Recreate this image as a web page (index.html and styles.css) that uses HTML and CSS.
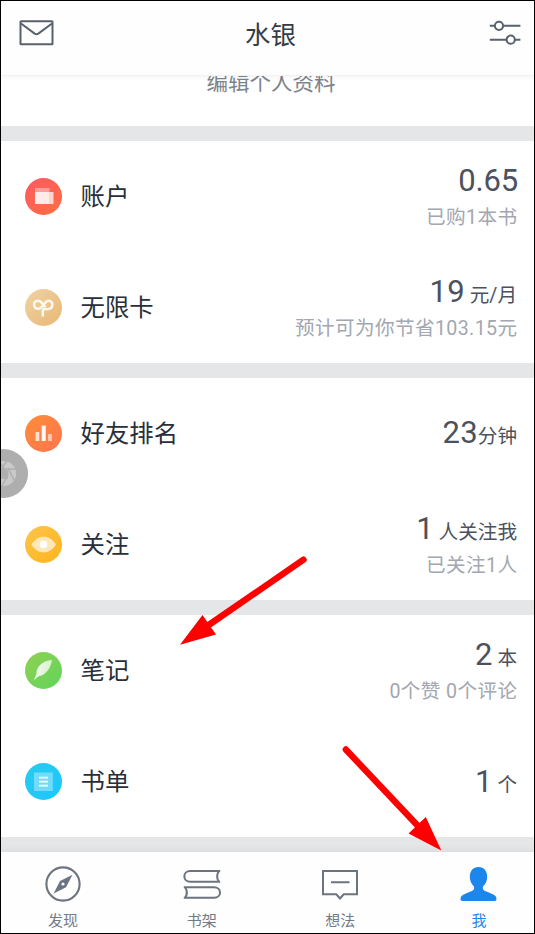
FILE: index.html
```html
<!DOCTYPE html>
<html lang="zh-CN">
<head>
<meta charset="utf-8">
<title>我</title>
<link rel="stylesheet" href="styles.css">
</head>
<body>
<div class="screen">
  <header class="header">
    <svg class="icon-mail" viewBox="0 0 36 26" fill="none" stroke="#59616d" stroke-width="2" stroke-linejoin="round"><rect x="1.5" y="1.2" width="32" height="23" rx=".5"/><path d="M2 3.5 15.7 13.6Q17.5 14.8 19.3 13.6L33 3.5"/></svg>
    <h1 class="title">水银</h1>
    <svg class="icon-settings" viewBox="0 0 32 26" fill="none" stroke="#59616d" stroke-width="2"><path d="M.8 5.8H5.5M14.5 5.8H31.4M.8 19.7H17M26 19.7H31.4"/><circle cx="10" cy="5.8" r="4.1"/><circle cx="21.7" cy="19.7" r="4.1"/></svg>
  </header>

  <main class="content">
    <div class="profile"><span class="edit">编辑个人资料</span></div>

    <section class="group">
      <div class="row">
        <svg class="badge" viewBox="0 0 37 37"><defs><linearGradient id="g1" x1="0" y1="0" x2=".7" y2="1"><stop stop-color="#fb5a63"/><stop offset="1" stop-color="#fe6c45"/></linearGradient></defs><circle cx="18.5" cy="18.5" r="18.5" fill="url(#g1)"/><path d="M10 10H24.5V14H10Z" fill="#fff" opacity=".38"/><path d="M24 14H28.5V26H24Z" fill="#fff" opacity=".72"/><path d="M10 14H24V26H10Z" fill="#fff" opacity=".87"/></svg>
        <span class="label">账户</span>
        <div class="info"><div class="value amount"><b>0.65</b></div><div class="sub">已购1本书</div></div>
      </div>
      <div class="row">
        <svg class="badge" viewBox="0 0 37 37"><defs><linearGradient id="g2" x1="0" y1="0" x2="1" y2="1"><stop stop-color="#f0d2a6"/><stop offset="1" stop-color="#e8b874"/></linearGradient></defs><circle cx="18.5" cy="18.5" r="18.5" fill="url(#g2)"/><path d="M17.8 27.5V21.6C17.8 19.4 19.6 20.3 23.2 20.1C28.6 19.7 28.8 11.8 23.6 11.8C19.2 11.8 17.8 19.8 13 19.8C7.8 19.6 7.8 12 13 11.8C15.2 11.7 16.6 13.2 18.6 15.8L20.5 18" fill="none" stroke="#fff8ed" stroke-width="2.5"/></svg>
        <span class="label">无限卡</span>
        <div class="info"><div class="value"><b>19</b> 元/月</div><div class="sub">预计可为你节省103.15元</div></div>
      </div>
    </section>

    <section class="group">
      <div class="row">
        <svg class="badge" viewBox="0 0 37 37"><defs><linearGradient id="g3" x1="0" y1="0" x2="1" y2="1"><stop stop-color="#ff8d38"/><stop offset="1" stop-color="#ff7450"/></linearGradient></defs><circle cx="18.5" cy="18.5" r="18.5" fill="url(#g3)"/><path d="M10.5 17H14.3V26H10.5Z" fill="#fff" opacity=".75"/><path d="M16.7 10.5H20.7V26H16.7Z" fill="#fff" opacity=".96"/><path d="M23 19H26.8V26H23Z" fill="#fff" opacity=".58"/></svg>
        <span class="label">好友排名</span>
        <div class="info"><div class="value single"><b>23</b>分钟</div></div>
      </div>
      <div class="row">
        <svg class="badge" viewBox="0 0 37 37"><defs><linearGradient id="g4" x1="0" y1="0" x2="1" y2="1"><stop stop-color="#fbc54b"/><stop offset="1" stop-color="#feb41c"/></linearGradient></defs><circle cx="18.5" cy="18.5" r="18.5" fill="url(#g4)"/><path d="M6.5 18.5C12.2 8 24.8 8 31 18.5C24.8 29 12.2 29 6.5 18.5Z" fill="#fff" opacity=".65"/><circle cx="18.5" cy="18.5" r="3.8" fill="#fff"/></svg>
        <span class="label">关注</span>
        <div class="info"><div class="value"><b>1</b> 人关注我</div><div class="sub">已关注1人</div></div>
      </div>
    </section>

    <section class="group">
      <div class="row">
        <svg class="badge" viewBox="0 0 37 37"><defs><linearGradient id="g5" x1="0" y1="0" x2="1" y2="1"><stop stop-color="#91d052"/><stop offset="1" stop-color="#60d55d"/></linearGradient><linearGradient id="leaf" x1="0" y1=".3" x2="1" y2=".7"><stop stop-color="#fff" stop-opacity=".95"/><stop offset="1" stop-color="#fff" stop-opacity=".65"/></linearGradient></defs><circle cx="18.5" cy="18.5" r="18.5" fill="url(#g5)"/><path d="M9.3 28.4C9.5 26 10.3 24.2 11.4 22.4C11.2 14.7 17 8.9 27 8C25.7 16 21.3 22.8 14 24.2C12.2 24.8 11 26.5 9.3 28.4Z" fill="url(#leaf)"/></svg>
        <span class="label">笔记</span>
        <div class="info"><div class="value"><b>2</b> 本</div><div class="sub">0个赞 0个评论</div></div>
      </div>
      <div class="row">
        <svg class="badge" viewBox="0 0 37 37"><defs><linearGradient id="g6" x1="0" y1="0" x2="1" y2="1"><stop stop-color="#27cbed"/><stop offset="1" stop-color="#1cc7ff"/></linearGradient></defs><circle cx="18.5" cy="18.5" r="18.5" fill="url(#g6)"/><path d="M9 9.5H27.8V28H9Z" fill="#fff" opacity=".36"/><path d="M14 14.7H23M14 18.7H23M14 22.7H23" stroke="#fff" stroke-width="1.7"/></svg>
        <span class="label">书单</span>
        <div class="info"><div class="value count"><b>1</b> 个</div></div>
      </div>
    </section>
  </main>

  <nav class="tabs">
    <div class="tab">
      <svg viewBox="0 0 38 38"><circle cx="19" cy="19" r="16.6" fill="none" stroke="#6c7480" stroke-width="2.1"/><path fill="#6c7480" fill-rule="evenodd" d="M28.5 9.8 22 22.2 9.7 28.4 16 16ZM19 17.4A1.6 1.6 0 1 0 19 20.6 1.6 1.6 0 1 0 19 17.4Z"/></svg>
      <span>发现</span>
    </div>
    <div class="tab">
      <svg viewBox="0 0 38 38" fill="none" stroke="#6c7480" stroke-width="2"><path d="M37.2 6.1H7.2C-.6 6.1-.6 16.7 7.2 16.7H37.2M35.9 6.1Q32.2 11.4 35.9 16.7M.8 22.2H31C39 22.2 39 32.8 31 32.8H.8M2 22.2Q5.7 27.5 2 32.8"/></svg>
      <span>书架</span>
    </div>
    <div class="tab">
      <svg viewBox="0 0 38 38" fill="none" stroke="#6c7480" stroke-width="2"><path d="M2 6H36V29.3H22.7L19 33.5 15.3 29.3H2ZM10 17.3H28.5"/></svg>
      <span>想法</span>
    </div>
    <div class="tab active">
      <svg viewBox="0 0 38 38"><path fill="#1d86ec" d="M18.5 2C24 2 27.2 6.2 27.2 11.8C27.2 16 25.5 19 23 21.4C22.3 24.3 23.7 25.2 26.5 26.5L33.3 29.5C35.8 30.8 36.5 32.2 36.5 34.3Q36.5 36 34.7 36H2.3Q.5 36 .5 34.3C.5 32.2 1.2 30.8 3.7 29.5L10.5 26.5C13.3 25.2 14.7 24.3 14 21.4C11.5 19 9.8 16 9.8 11.8C9.8 6.2 13 2 18.5 2Z"/></svg>
      <span>我</span>
    </div>
  </nav>

  <svg class="float-button" viewBox="0 0 28 50"><circle cx="2.7" cy="24.5" r="24.4" fill="#aeaeae"/><circle cx="2.7" cy="24.5" r="12.5" fill="#c9c9c9"/><path d="M-2 12 5 23M6 11.5-1 22.5M15 20H1.5M13 31 7 19M1 37 7 26M-6 29H7" stroke="#aeaeae" stroke-width="1.5"/><path d="M3 19.5 7.3 22V27L3 29.5-1.3 27V22Z" fill="#aeaeae"/></svg>

  <svg class="arrows" viewBox="0 0 535 934" fill="#fe0000" stroke="#fe0000"><path d="M303.5 559.7 208 625.5M345.8 749.5 418 826" fill="none" stroke-width="6.4" stroke-linecap="round"/><path stroke="none" d="M180 644.8 202.5 615 216 634.5ZM441.3 850.5 408.5 833.5 425.8 817Z"/></svg>
</div>
</body>
</html>
```

FILE: styles.css
```css
* { box-sizing: border-box; }

body {
  margin: 0;
  font-family: Roboto, "Noto Sans CJK SC", sans-serif;
}

.screen {
  position: relative;
  display: flex;
  flex-direction: column;
  width: 535px;
  height: 934px;
  border: 1px solid #000;
  background: #fff;
  overflow: hidden;
}

.header {
  display: grid;
  grid-template-columns: 36px 1fr 32px;
  align-items: center;
  flex: none;
  height: 75px;
  padding: 0 13px 10px 18px;
  border-bottom: 1px solid #f2f2f3;
  background: #fefefe;
  box-shadow: 0 1px 5px rgba(0, 0, 0, .05);
  z-index: 1;
}

.icon-mail { width: 36px; height: 26px; }
.icon-settings { width: 32px; height: 26px; }

.title {
  margin: 3px 0 0;
  padding-right: 3px;
  text-align: center;
  font-size: 25.5px;
  font-weight: 400;
  line-height: 36px;
  color: #353c46;
}

.content {
  display: flex;
  flex-direction: column;
  gap: 15px;
  height: 776px;
  flex: none;
  background: #e5e6e8;
}

.profile {
  display: flex;
  justify-content: center;
  align-items: flex-start;
  flex: none;
  height: 50px;
  padding-left: 7px;
  background: #fff;
}

.edit {
  margin-top: -9px;
  font-size: 21.5px;
  line-height: 32px;
  color: #7d838c;
}

.group { flex: none; background: #fff; }

.row {
  display: flex;
  align-items: center;
  height: 111px;
  padding: 0 17px 0 24px;
}

.badge { width: 37px; height: 37px; }

.label {
  flex: 1;
  margin-left: 18.5px;
  font-size: 24.4px;
  line-height: 36px;
  color: #292f39;
}

.info { text-align: right; }

.value {
  height: 38px;
  font-size: 19.6px;
  line-height: 38px;
  color: #4c525d;
  white-space: nowrap;
}

.value b {
  font-size: 31px;
  font-weight: 400;
  letter-spacing: .2px;
}

.amount { margin-right: -1px; }
.amount b { letter-spacing: -.2px; }
.single { margin-top: -2px; }

.sub {
  height: 34px;
  margin-right: -.5px;
  font-size: 19.6px;
  line-height: 36px;
  letter-spacing: .4px;
  color: #a2a7b0;
  white-space: nowrap;
}

.info:has(.sub) { padding-top: 3px; }

.tabs {
  display: grid;
  grid-template-columns: repeat(4, 138.7px);
  justify-content: center;
  flex: none;
  height: 81px;
  padding-left: 7px;
  background: #fefefe;
  box-shadow: 0 -1px 8px rgba(0, 0, 0, .06);
  z-index: 1;
}

.tab {
  display: flex;
  flex-direction: column;
  align-items: center;
  padding-top: 13px;
  font-size: 15px;
  line-height: 22px;
  color: #737b86;
}

.tab svg { width: 38px; height: 38px; margin-bottom: 7px; }

.active { color: #1d86ec; }

.float-button {
  position: absolute;
  left: 0;
  top: 448px;
  width: 28px;
  height: 50px;
  z-index: 2;
}

.arrows {
  position: absolute;
  left: -1px;
  top: -1px;
  width: 535px;
  height: 934px;
  z-index: 3;
}
```
